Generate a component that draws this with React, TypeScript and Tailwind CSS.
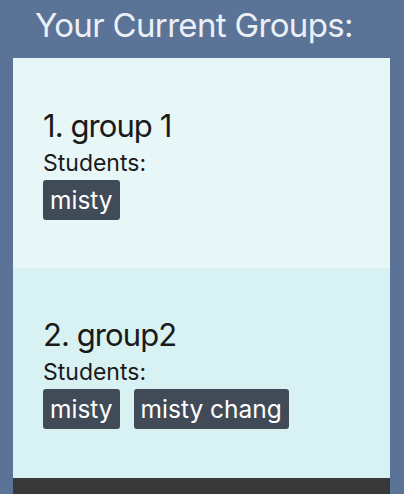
import React from "react";

type Group = { name: string; students: string[] };

const GROUPS: Group[] = [
  { name: "group 1", students: ["misty"] },
  { name: "group2", students: ["misty", "misty chang"] },
];

export default function App() {
  return (
    <div
      className="min-h-[494px] bg-[#5c7398] flex flex-col"
      style={{ fontFamily: "Inter, 'Noto Sans', sans-serif" }}
    >
      <h1 className="h-[58px] pl-[35px] pt-[3px] text-[33px] leading-[44px] tracking-[-0.02em] text-[#eaf0f6]">
        Your Current Groups:
      </h1>
      <div className="ml-[13px] mr-[14px] flex flex-col">
        {GROUPS.map((g, i) => (
          <div
            key={g.name}
            className={`h-[210px] pl-[30px] ${
              i % 2 === 0 ? "bg-[#e7f6f7] pt-[48px]" : "bg-[#d8f1f2] pt-[47px]"
            }`}
          >
            <div className="text-[31px] leading-[40px] tracking-[-0.03em] text-[#1a1a1a] mb-[1px]">
              {i + 1}. {g.name}
            </div>
            <div className="text-[23px] leading-[32px] text-[#1a1a1a]">
              Students:
            </div>
            <div className="flex gap-[14px] mt-[1px]">
              {g.students.map((s) => (
                <span
                  key={s}
                  className="h-[40px] px-[7px] rounded-[3px] bg-[#414b57] text-white text-[24.5px] leading-[40px]"
                >
                  {s}
                </span>
              ))}
            </div>
          </div>
        ))}
        <div className="h-[16px] bg-[#383838]" />
      </div>
    </div>
  );
}
